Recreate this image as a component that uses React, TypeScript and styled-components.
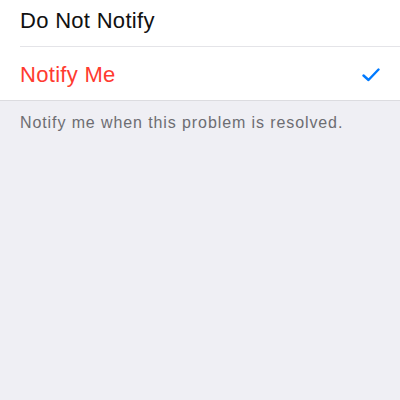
import React, { useState } from 'react'
import styled, { createGlobalStyle } from 'styled-components'

const GlobalStyle = createGlobalStyle`
  html, body {
    margin: 0;
    padding: 0;
    background: #efeff4;
    font-family: "Liberation Sans", Arial, sans-serif;
  }
`

const Page = styled.div`
  width: 400px;
  height: 400px;
  overflow: hidden;
  background: #efeff4;
`

const List = styled.div`
  margin-top: -6px;
  background: #ffffff;
  border-bottom: 1px solid #dcdce0;
`

const Row = styled.div<{ $last?: boolean }>`
  height: 53px;
  margin-left: 20px;
  padding: 2px 20px 0 0;
  display: flex;
  align-items: center;
  justify-content: space-between;
  box-sizing: border-box;
  border-bottom: ${p => (p.$last ? 'none' : '1px solid #e4e4e8')};
  cursor: pointer;
`

const Label = styled.span<{ $selected?: boolean }>`
  font-size: 22px;
  letter-spacing: 0.3px;
  color: ${p => (p.$selected ? '#ff3b30' : '#111111')};
`

const Check = styled.svg`
  width: 18px;
  height: 14px;
`

const Footer = styled.p`
  margin: 0;
  padding: 13px 20px;
  font-size: 16px;
  letter-spacing: 0.9px;
  color: #6d6d72;
`

const options = ['Do Not Notify', 'Notify Me']

const App: React.FC = () => {
  const [selected, setSelected] = useState(1)

  return (
    <Page>
      <GlobalStyle />
      <List>
        {options.map((opt, i) => (
          <Row key={opt} $last={i === options.length - 1} onClick={() => setSelected(i)}>
            <Label $selected={selected === i}>{opt}</Label>
            {selected === i && (
              <Check viewBox="0 0 18 14">
                <path d="M1.5 7.5 L6.5 12 L16.5 1.5" fill="none" stroke="#007aff" strokeWidth="2.4" strokeLinecap="round" strokeLinejoin="round" />
              </Check>
            )}
          </Row>
        ))}
      </List>
      <Footer>Notify me when this problem is resolved.</Footer>
    </Page>
  )
}

export default App
